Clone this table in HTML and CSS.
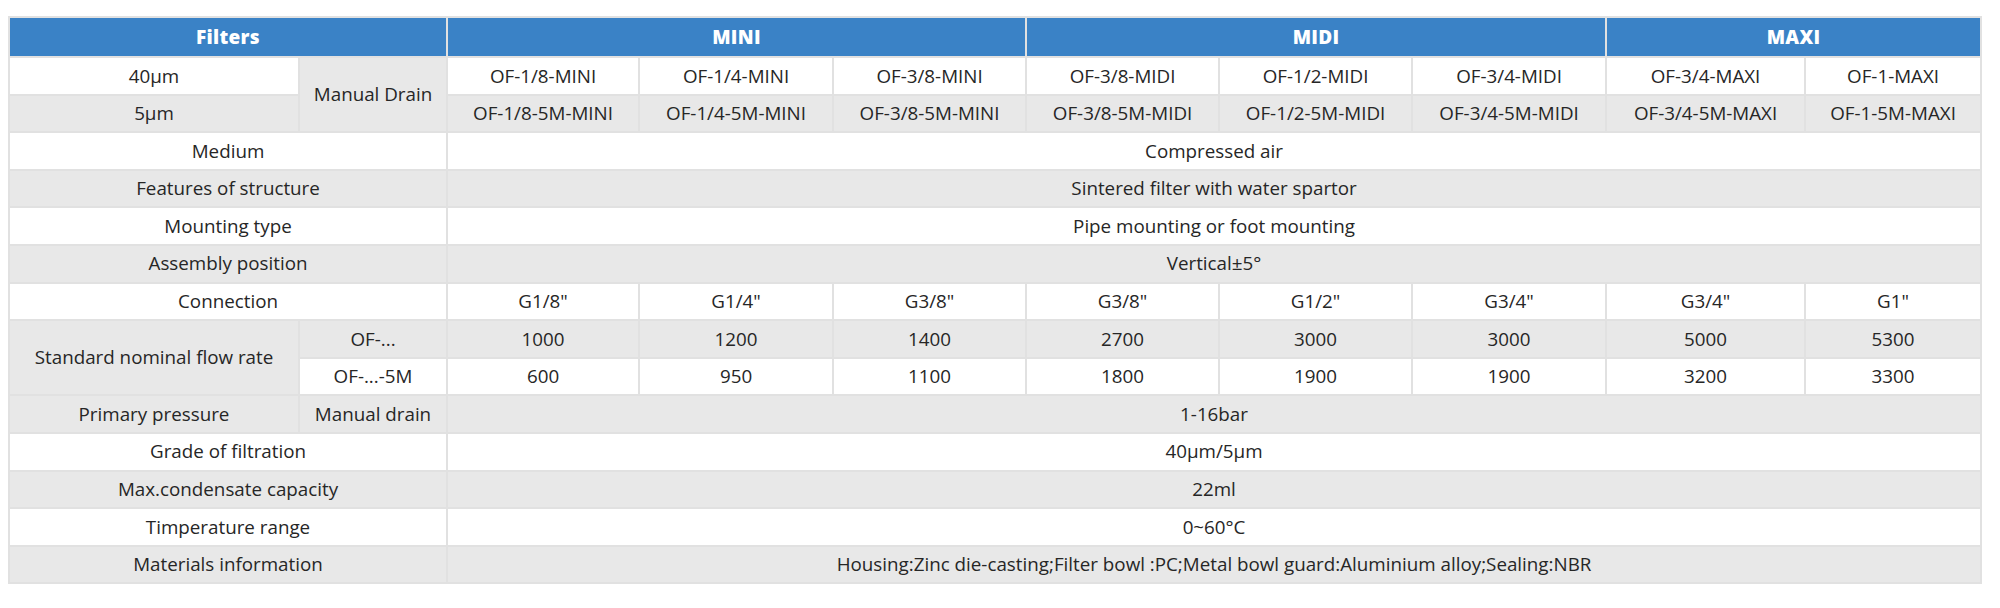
FILE: index.html
```html
<!DOCTYPE html>
<html>
<head>
<meta charset="utf-8">
<link rel="stylesheet" href="styles.css">
</head>
<body>
<table class="spec">
  <colgroup>
    <col class="c-label"><col class="c-sub">
    <col class="c1"><col class="c2"><col class="c3"><col class="c4"><col class="c5"><col class="c6"><col class="c7"><col class="c8">
  </colgroup>
  <thead>
    <tr class="head">
      <th colspan="2">Filters</th>
      <th colspan="3">MINI</th>
      <th colspan="3">MIDI</th>
      <th colspan="2">MAXI</th>
    </tr>
  </thead>
  <tbody>
    <tr class="w">
      <td>40μm</td>
      <td rowspan="2" class="g">Manual Drain</td>
      <td>OF-1/8-MINI</td><td>OF-1/4-MINI</td><td>OF-3/8-MINI</td>
      <td>OF-3/8-MIDI</td><td>OF-1/2-MIDI</td><td>OF-3/4-MIDI</td>
      <td>OF-3/4-MAXI</td><td>OF-1-MAXI</td>
    </tr>
    <tr class="g">
      <td>5μm</td>
      <td>OF-1/8-5M-MINI</td><td>OF-1/4-5M-MINI</td><td>OF-3/8-5M-MINI</td>
      <td>OF-3/8-5M-MIDI</td><td>OF-1/2-5M-MIDI</td><td>OF-3/4-5M-MIDI</td>
      <td>OF-3/4-5M-MAXI</td><td>OF-1-5M-MAXI</td>
    </tr>
    <tr class="w"><td colspan="2">Medium</td><td colspan="8">Compressed air</td></tr>
    <tr class="g"><td colspan="2">Features of structure</td><td colspan="8">Sintered filter with water spartor</td></tr>
    <tr class="w"><td colspan="2">Mounting type</td><td colspan="8">Pipe mounting or foot mounting</td></tr>
    <tr class="g"><td colspan="2">Assembly position</td><td colspan="8">Vertical±5°</td></tr>
    <tr class="w">
      <td colspan="2">Connection</td>
      <td>G1/8"</td><td>G1/4"</td><td>G3/8"</td><td>G3/8"</td><td>G1/2"</td><td>G3/4"</td><td>G3/4"</td><td>G1"</td>
    </tr>
    <tr class="g">
      <td rowspan="2" class="g">Standard nominal flow rate</td>
      <td>OF-...</td>
      <td>1000</td><td>1200</td><td>1400</td><td>2700</td><td>3000</td><td>3000</td><td>5000</td><td>5300</td>
    </tr>
    <tr class="w">
      <td>OF-...-5M</td>
      <td>600</td><td>950</td><td>1100</td><td>1800</td><td>1900</td><td>1900</td><td>3200</td><td>3300</td>
    </tr>
    <tr class="g"><td>Primary pressure</td><td>Manual drain</td><td colspan="8">1-16bar</td></tr>
    <tr class="w"><td colspan="2">Grade of filtration</td><td colspan="8">40μm/5μm</td></tr>
    <tr class="g"><td colspan="2">Max.condensate capacity</td><td colspan="8">22ml</td></tr>
    <tr class="w"><td colspan="2">Timperature range</td><td colspan="8">0~60°C</td></tr>
    <tr class="g"><td colspan="2">Materials information</td><td colspan="8">Housing:Zinc die-casting;Filter bowl :PC;Metal bowl guard:Aluminium alloy;Sealing:NBR</td></tr>
  </tbody>
</table>
</body>
</html>
```

FILE: styles.css
```css
html, body {
  margin: 0;
  padding: 0;
  background: #ffffff;
}
body {
  padding: 16px 0 0 8px;
  font-family: "Open Sans", "Noto Sans", sans-serif;
  color: #262626;
}
.spec {
  width: 1972px;
  table-layout: fixed;
  border-collapse: collapse;
  font-size: 18.8px;
}
.c-label { width: 290px; }
.c-sub { width: 148px; }
.c1 { width: 192px; }
.c2 { width: 194px; }
.c3 { width: 193px; }
.c4 { width: 193px; }
.c5 { width: 193px; }
.c6 { width: 194px; }
.c7 { width: 199px; }
.c8 { width: 176px; }
.spec th, .spec td {
  border: 2px solid #e1e1e1;
  text-align: center;
  padding: 0;
  white-space: nowrap;
  line-height: 1.2;
}
.spec td {
  height: 35.6px;
}
.head th {
  height: 38px;
  background: #3a82c6;
  color: #ffffff;
  font-weight: 800;
  font-size: 19px;
  letter-spacing: 0.3px;
  border-color: #e1e1e1;
}
tr.w td { background: #ffffff; }
tr.g td { background: #e8e8e8; }
td.g, tr.w td.g { background: #e8e8e8; }
```
